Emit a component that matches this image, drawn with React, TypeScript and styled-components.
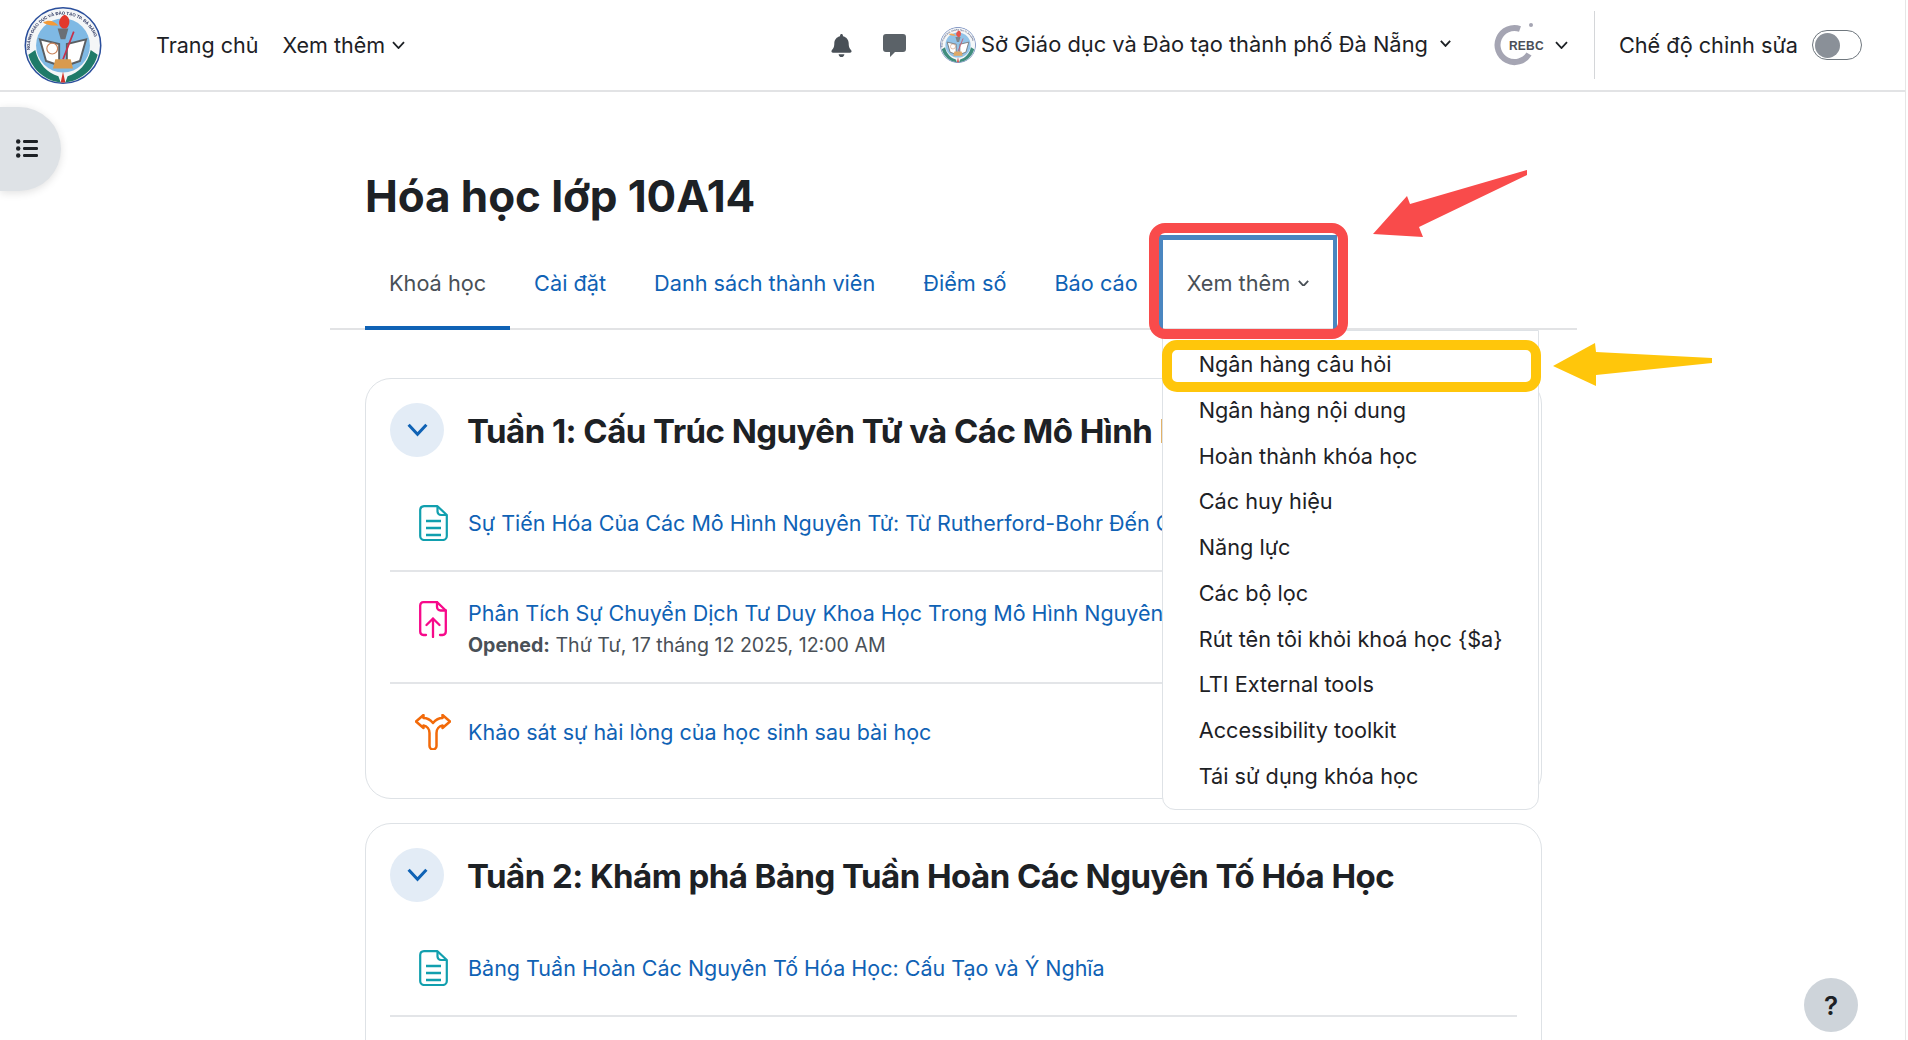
import styled, { createGlobalStyle } from "styled-components";
import { FaBell } from "react-icons/fa";

const GlobalStyle = createGlobalStyle`
  html, body {
    margin: 0;
    height: 1040px;
    overflow: hidden;
    background: #fff;
    color: #1d2125;
    font-family: Inter, "Noto Sans", "Liberation Sans", sans-serif;
    font-size: 21.7px;
  }
  * { box-sizing: border-box; }
`;

const Page = styled.div`
  position: relative;
  width: 1906px;
  height: 1040px;
  overflow: hidden;
  border-right: 1px solid #e6e6e6;
`;

const Header = styled.header`
  display: flex;
  align-items: center;
  height: 92px;
  padding-left: 24px;
  border-bottom: 2px solid #e2e3e5;
`;

const LogoWrap = styled.div`
  width: 78px;
  height: 77px;
  margin-right: 54px;
  filter: blur(0.4px);
`;

const NavItem = styled.span`
  display: inline-flex;
  align-items: center;
  gap: 7px;
  margin-right: 24px;
  color: #1d2125;
  font-size: 21.5px;
`;

const RightGroup = styled.div`
  display: flex;
  align-items: center;
  margin-left: auto;
  height: 100%;
`;

const IconBtn = styled.span`
  display: inline-flex;
  align-items: center;
  justify-content: center;
  color: #495057;
  font-size: 23px;
  margin-right: 30px;
`;

const Avatar = styled.div`
  width: 36px;
  height: 36px;
  margin: 0 5px 0 4px;
  border-radius: 50%;
  overflow: hidden;
  opacity: 0.85;
  filter: blur(0.4px);
`;

const School = styled.span`
  display: inline-flex;
  align-items: center;
  gap: 12px;
  margin-right: 42px;
  margin-top: -3px;
  font-size: 21.85px;
`;

const UserMenu = styled.div`
  display: flex;
  align-items: center;
  gap: 10px;
  margin-right: 26px;
`;

const Divider = styled.div`
  width: 1px;
  height: 68px;
  background: #d4d6d9;
  margin-right: 24px;
`;

const EditLabel = styled.span`
  margin-right: 14px;
`;

const Toggle = styled.span`
  display: flex;
  align-items: center;
  width: 50px;
  height: 30px;
  padding: 0 2px;
  margin-right: 43px;
  border: 1px solid #6f777e;
  border-radius: 15px;
`;

const Thumb = styled.span`
  width: 25px;
  height: 25px;
  border-radius: 50%;
  background: #8a9098;
`;

const SidebarToggle = styled.div`
  position: absolute;
  left: 0;
  top: 107px;
  width: 61px;
  height: 84px;
  display: flex;
  align-items: center;
  padding: 0 0 2px 16px;
  background: #dee2e6;
  border-radius: 0 42px 42px 0;
  box-shadow: 0 2px 8px rgba(0, 0, 0, 0.12);
`;

const HelpButton = styled.div`
  position: absolute;
  left: 1804px;
  top: 978px;
  width: 54px;
  height: 54px;
  display: flex;
  align-items: center;
  justify-content: center;
  border-radius: 50%;
  background: #ced4da;
  font-size: 26px;
  font-weight: 600;
`;

const Main = styled.main`
  width: 1247px;
  margin-left: 330px;
`;

const Title = styled.h1`
  margin: 0;
  padding: 66px 35px 0;
  height: 165px;
  font-size: 44px;
  line-height: 76px;
  font-weight: 700;
  letter-spacing: -0.1px;
`;

const TabBar = styled.nav`
  display: flex;
  height: 73px;
  padding-left: 35px;
  border-bottom: 2px solid #e2e3e5;
`;

const Tab = styled.span<{ $active?: boolean }>`
  display: flex;
  align-items: center;
  height: 73px;
  padding: 0 24px 18px;
  color: ${(p) => (p.$active ? "#495057" : "#0f62b5")};
  border-bottom: 4px solid ${(p) => (p.$active ? "#0f62b5" : "transparent")};
`;

const MoreTab = styled.div`
  position: relative;
  display: flex;
  align-items: center;
  gap: 8px;
  width: 178px;
  height: 94px;
  margin: -22px 0 0 -3px;
  padding: 0 0 3px 24px;
  color: #495057;
  border: 4px solid #4a86c0;
  border-top-width: 5px;
  border-bottom: none;
`;

const RedBox = styled.div`
  position: absolute;
  left: -14px;
  top: -17px;
  z-index: 5;
  width: 199px;
  height: 116px;
  border: 10px solid #f94b4b;
  border-radius: 16px;
`;

const RedArrow = styled.svg`
  position: absolute;
  left: 208px;
  top: -70px;
`;

const Menu = styled.div`
  position: absolute;
  left: -1px;
  top: 90px;
  z-index: 3;
  width: 377px;
  padding: 11px 0 9px;
  background: #fff;
  border: 1px solid #dee2e6;
  border-radius: 0 0 13px 13px;
  color: #1d2125;
`;

const MenuItem = styled.div`
  position: relative;
  height: 45.75px;
  line-height: 45.75px;
  padding-left: 36px;
`;

const YellowBox = styled.div`
  position: absolute;
  left: -1px;
  top: -2px;
  width: 379px;
  height: 52px;
  border: 10px solid #ffc60b;
  border-radius: 15px;
`;

const YellowArrow = styled.svg`
  position: absolute;
  left: 388px;
  top: 1px;
`;

const Card = styled.section<{ $cut?: boolean }>`
  width: 1177px;
  margin: 48px 0 24px 35px;
  padding: 24px 24px ${(p) => (p.$cut ? 60 : 16)}px;
  border: 1px solid #dee2e6;
  border-radius: 26px;

  & + & {
    margin-top: 0;
  }
`;

const CardHeader = styled.div`
  display: flex;
  align-items: center;
  gap: 23px;
  margin-bottom: 18px;
`;

const Collapse = styled.span`
  display: flex;
  flex: none;
  align-items: center;
  justify-content: center;
  width: 54px;
  height: 54px;
  border-radius: 50%;
  background: #e3ecf6;
`;

const CardTitle = styled.h3`
  margin: 0;
  padding-top: 2px;
  font-size: 33px;
  font-weight: 700;
  letter-spacing: -0.55px;
  white-space: nowrap;
`;

const Row = styled.div<{ $top?: boolean; $last?: boolean }>`
  display: flex;
  align-items: ${(p) => (p.$top ? "flex-start" : "center")};
  height: ${(p) => (p.$top ? 112 : p.$last ? 98 : 97)}px;
  padding: ${(p) => (p.$top ? "25px 0 0" : p.$last ? "0 0 2px" : "1px 0 0")};
  border-bottom: ${(p) => (p.$last ? "none" : "2px solid #e3e5e8")};
`;

const IconSlot = styled.span<{ $top?: boolean }>`
  display: flex;
  flex: none;
  justify-content: center;
  width: 56px;
  margin: ${(p) => (p.$top ? "4px" : "0")} 7px 0 15px;
`;

const RowLink = styled.div`
  color: #0f62b5;
  font-size: 21.5px;
  line-height: 33px;
  white-space: nowrap;
`;

const RowMeta = styled.div`
  margin-top: -1px;
  color: #495057;
  font-size: 19.6px;
  line-height: 32px;
  white-space: nowrap;

  b {
    font-weight: 700;
  }
`;

function Chevron({ size = 13, color = "#1d2125", width = 1.8 }: { size?: number; color?: string; width?: number }) {
  return (
    <svg width={size} height={size * 0.62} viewBox="0 0 13 8" fill="none">
      <polyline points="1,1 6.5,7 12,1" stroke={color} strokeWidth={width * (13 / size)} />
    </svg>
  );
}

function Crest({ id }: { id: string }) {
  return (
    <svg width="100%" height="100%" viewBox="0 0 100 100">
      <defs>
        <path id={id} d="M8 62 A43 43 0 1 1 92 62" />
      </defs>
      <circle cx="50" cy="50" r="49" fill="#f4f6f7" stroke="#2b4f9c" strokeWidth="2" />
      <text fontSize="5.6" fontWeight="700" fill="#27315c" fontFamily="Liberation Sans, sans-serif">
        <textPath href={`#${id}`} startOffset="4%">
          NGÀNH GIÁO DỤC VÀ ĐÀO TẠO TP. ĐÀ NẴNG
        </textPath>
      </text>
      <circle cx="50" cy="50" r="35" fill="#7fb9e4" />
      <path d="M5 62 C10 82 28 96 47 98 L44 90 C30 86 18 74 14 56 Z" fill="#1f7a68" />
      <path d="M95 62 C90 82 72 96 53 98 L56 90 C70 86 82 74 86 56 Z" fill="#1f7a68" />
      <path d="M47 98 L50 84 L53 98 Z" fill="#d0342c" />
      <path d="M20 42 L45 48 L45 76 L28 70 Z" fill="#fff" stroke="#5b5f63" strokeWidth="2.5" />
      <path d="M80 42 L55 48 L55 76 L72 70 Z" fill="#fff" stroke="#5b5f63" strokeWidth="2.5" />
      <circle cx="36" cy="54" r="7" fill="none" stroke="#c9835a" strokeWidth="1.5" />
      <path d="M43 28 L57 28 L53 42 L47 42 Z" fill="#6a6f74" />
      <path d="M50 28 C42 24 44 14 52 10 C60 12 60 24 54 28 Z" fill="#e2382c" />
      <path d="M24 20 C32 16 38 18 44 24 C36 24 30 24 24 20 Z" fill="#f49a37" />
      <line x1="64" y1="32" x2="50" y2="68" stroke="#c5304a" strokeWidth="2.2" />
      <path d="M40 68 H60 L63 80 H37 Z" fill="#d99a4e" />
    </svg>
  );
}

function RebcLogo() {
  return (
    <svg width="52" height="46" viewBox="0 0 52 46">
      <path d="M27 7 A17 17 0 1 0 36 32" fill="none" stroke="#a5a5b3" strokeWidth="6" />
      <circle cx="38" cy="3" r="2" fill="#a5a5b3" />
      <text x="16" y="27.5" fontSize="12" fontWeight="700" fill="#4b4f58" fontFamily="Liberation Sans, sans-serif" letterSpacing="0.2">
        REBC
      </text>
    </svg>
  );
}

function ChatIcon() {
  return (
    <svg width="23" height="23" viewBox="0 0 23 23">
      <path d="M3 0 H20 A3 3 0 0 1 23 3 V15 A3 3 0 0 1 20 18 H12 L7 23 V18 H3 A3 3 0 0 1 0 15 V3 A3 3 0 0 1 3 0 Z" fill="#5b6268" />
    </svg>
  );
}

function ListIcon() {
  return (
    <svg width="22" height="19" viewBox="0 0 22 19" fill="#1d2125">
      <circle cx="2.2" cy="2.5" r="2.2" />
      <circle cx="2.2" cy="9.5" r="2.2" />
      <circle cx="2.2" cy="16.5" r="2.2" />
      <rect x="7" y="1" width="15" height="3" rx="1.2" />
      <rect x="7" y="8" width="15" height="3" rx="1.2" />
      <rect x="7" y="15" width="15" height="3" rx="1.2" />
    </svg>
  );
}

function PageIcon() {
  return (
    <svg width="29" height="36" viewBox="0 0 29 36" fill="none" stroke="#119fae" strokeWidth="2.2" strokeLinejoin="round">
      <path d="M5 1.2 H18.5 L27.8 10 V31 A4 4 0 0 1 23.8 35 H5 A4 4 0 0 1 1.2 31 V5 A4 4 0 0 1 5 1.2 Z" />
      <path d="M18.5 1.2 V6.5 A3.5 3.5 0 0 0 22 10 H27.8" />
      <path d="M7 16 H22 M7 23 H22 M7 30 H22" strokeWidth="2.4" />
    </svg>
  );
}

function UploadIcon() {
  return (
    <svg width="28" height="37" viewBox="0 0 28 37" fill="none" stroke="#f7098a" strokeWidth="2.3" strokeLinejoin="round" strokeLinecap="round">
      <path d="M7 34 H4.5 A3.5 3.5 0 0 1 1.2 30.5 V4.5 A3.5 3.5 0 0 1 4.5 1.2 H18 L26.8 9.5 V30.5 A3.5 3.5 0 0 1 23.5 34 H21" />
      <path d="M18 1.2 V6 A3.5 3.5 0 0 0 21.5 9.5 H26.8" />
      <path d="M14 36 V17.5 M7.5 24 L14 17.5 L20.5 24" />
    </svg>
  );
}

function ForkIcon() {
  return (
    <svg width="36" height="36" viewBox="0 0 36 36" fill="none" stroke="#f26a0a" strokeWidth="2.5" strokeLinejoin="round">
      <path d="M14.5 32 V19 C14.5 15 12 12 8.5 11.5 V14 L1 7.5 L8.5 1 V4 C12 4 15.5 6 18 9 C20.5 6 24 4 27.5 4 V1 L35 7.5 L27.5 14 V11.5 C24 12 21.5 15 21.5 19 V32 A3.5 3.5 0 0 1 14.5 32 Z" />
    </svg>
  );
}

const menuItems = [
  "Ngân hàng câu hỏi",
  "Ngân hàng nội dung",
  "Hoàn thành khóa học",
  "Các huy hiệu",
  "Năng lực",
  "Các bộ lọc",
  "Rút tên tôi khỏi khoá học {$a}",
  "LTI External tools",
  "Accessibility toolkit",
  "Tái sử dụng khóa học",
];

export default function App() {
  return (
    <>
      <GlobalStyle />
      <Page>
        <Header>
          <LogoWrap>
            <Crest id="crest-main" />
          </LogoWrap>
          <NavItem>Trang chủ</NavItem>
          <NavItem>
            Xem thêm <Chevron />
          </NavItem>
          <RightGroup>
            <IconBtn>
              <FaBell />
            </IconBtn>
            <IconBtn>
              <ChatIcon />
            </IconBtn>
            <Avatar>
              <Crest id="crest-small" />
            </Avatar>
            <School>
              Sở Giáo dục và Đào tạo thành phố Đà Nẵng <Chevron size={11} />
            </School>
            <UserMenu>
              <RebcLogo />
              <Chevron />
            </UserMenu>
            <Divider />
            <EditLabel>Chế độ chỉnh sửa</EditLabel>
            <Toggle>
              <Thumb />
            </Toggle>
          </RightGroup>
        </Header>

        <SidebarToggle>
          <ListIcon />
        </SidebarToggle>

        <Main>
          <Title>Hóa học lớp 10A14</Title>
          <TabBar>
            <Tab $active>Khoá học</Tab>
            <Tab>Cài đặt</Tab>
            <Tab>Danh sách thành viên</Tab>
            <Tab>Điểm số</Tab>
            <Tab>Báo cáo</Tab>
            <MoreTab>
              Xem thêm <Chevron size={11} color="#495057" />
              <RedBox />
              <RedArrow width="156" height="72" viewBox="0 0 156 72">
                <polygon points="2,64 52,67 48,57 156,5 156,0 39,34 36,26" fill="#f94b4b" />
              </RedArrow>
              <Menu>
                {menuItems.map((item, index) => (
                  <MenuItem key={item}>
                    {item}
                    {index === 0 && (
                      <>
                        <YellowBox />
                        <YellowArrow width="162" height="46" viewBox="0 0 162 46">
                          <polygon points="2,23 44,0 45,9 161,15 161,20 45,32 45,43" fill="#ffc60b" />
                        </YellowArrow>
                      </>
                    )}
                  </MenuItem>
                ))}
              </Menu>
            </MoreTab>
          </TabBar>

          <Card>
            <CardHeader>
              <Collapse>
                <Chevron size={21} color="#0f62b5" width={3} />
              </Collapse>
              <CardTitle>Tuần 1: Cấu Trúc Nguyên Tử và Các Mô Hình Nguyên Tử</CardTitle>
            </CardHeader>
            <Row>
              <IconSlot>
                <PageIcon />
              </IconSlot>
              <RowLink>Sự Tiến Hóa Của Các Mô Hình Nguyên Tử: Từ Rutherford-Bohr Đến Cơ Học Lượng Tử</RowLink>
            </Row>
            <Row $top>
              <IconSlot $top>
                <UploadIcon />
              </IconSlot>
              <div>
                <RowLink>Phân Tích Sự Chuyển Dịch Tư Duy Khoa Học Trong Mô Hình Nguyên Tử</RowLink>
                <RowMeta>
                  <b>Opened:</b> Thứ Tư, 17 tháng 12 2025, 12:00 AM
                </RowMeta>
              </div>
            </Row>
            <Row $last>
              <IconSlot>
                <ForkIcon />
              </IconSlot>
              <RowLink>Khảo sát sự hài lòng của học sinh sau bài học</RowLink>
            </Row>
          </Card>

          <Card $cut>
            <CardHeader>
              <Collapse>
                <Chevron size={21} color="#0f62b5" width={3} />
              </Collapse>
              <CardTitle>Tuần 2: Khám phá Bảng Tuần Hoàn Các Nguyên Tố Hóa Học</CardTitle>
            </CardHeader>
            <Row>
              <IconSlot>
                <PageIcon />
              </IconSlot>
              <RowLink>Bảng Tuần Hoàn Các Nguyên Tố Hóa Học: Cấu Tạo và Ý Nghĩa</RowLink>
            </Row>
          </Card>
        </Main>

        <HelpButton>?</HelpButton>
      </Page>
    </>
  );
}
